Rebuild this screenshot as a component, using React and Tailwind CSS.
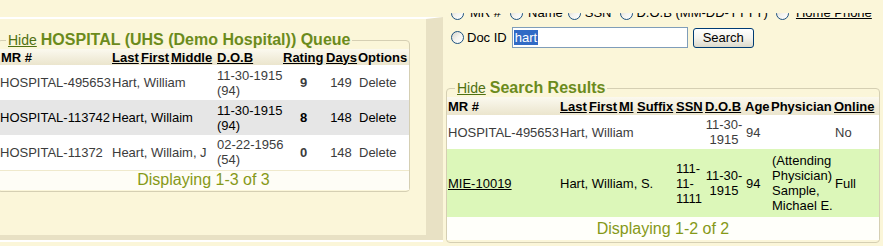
import React from "react";

const Radio = ({ className = "" }) => (
  <span
    className={`inline-block w-[13px] h-[13px] shrink-0 rounded-full border border-[#1c5180] bg-gradient-to-br from-[#d6d4cc] via-[#f4f3ee] to-white ${className}`}
  />
);

const queueRows = [
  { mr: "HOSPITAL-495653", name: "Hart, William", dob: "11-30-1915", age: "(94)", rating: "9", days: "149", bg: "bg-white", text: "text-[#3c3c3c]" },
  { mr: "HOSPITAL-113742", name: "Heart, Willaim", dob: "11-30-1915", age: "(94)", rating: "8", days: "148", bg: "bg-[#e6e6e6]", text: "text-black" },
  { mr: "HOSPITAL-11372", name: "Heart, Willaim, J", dob: "02-22-1956", age: "(54)", rating: "0", days: "148", bg: "bg-white", text: "text-[#3c3c3c]" },
];

function Legend({ title }) {
  return (
    <legend className="ml-[8px] px-[2px] leading-[18px] h-[18px] whitespace-nowrap">
      <span className="text-[14px] text-[#4f7012] underline mr-[4px]">Hide</span>
      <span className="text-[16px] font-bold text-[#6b8b1c]">{title}</span>
    </legend>
  );
}

function QueuePanel() {
  return (
    <fieldset className="ml-[-3px] w-[413px] mt-[12px] border border-[#d5cfb3] rounded-[4px] pb-[1px]">
      <Legend title="HOSPITAL (UHS (Demo Hospital)) Queue" />
      <table className="table-fixed border-collapse w-[411px] text-[13px] leading-[15px]">
        <colgroup>
          <col className="w-[113px]" />
          <col className="w-[29px]" />
          <col className="w-[30px]" />
          <col className="w-[45px]" />
          <col className="w-[67px]" />
          <col className="w-[43px]" />
          <col className="w-[32px]" />
          <col className="w-[52px]" />
        </colgroup>
        <thead>
          <tr className="h-[16px] bg-gradient-to-b from-[#fbf9ef] to-[#ebe5cd] font-bold text-black">
            <th className="text-left pl-[3px] font-bold">MR #</th>
            <th className="text-left pl-[1px] font-bold underline">Last</th>
            <th className="text-left pl-[1px] font-bold underline">First</th>
            <th className="text-left pl-[1px] font-bold underline">Middle</th>
            <th className="text-left pl-[2px] font-bold underline">D.O.B</th>
            <th className="text-left pl-[1px] font-bold underline">Rating</th>
            <th className="text-left pl-[1px] font-bold underline">Days</th>
            <th className="text-left pl-[1px] font-bold">Options</th>
          </tr>
        </thead>
        <tbody>
          {queueRows.map((r) => (
            <tr key={r.mr} className={`h-[35px] ${r.bg} ${r.text}`}>
              <td className="pl-[2px] whitespace-nowrap align-middle">{r.mr}</td>
              <td colSpan={3} className="pl-[1px] whitespace-nowrap align-middle">{r.name}</td>
              <td className="pl-[2px] align-middle">
                <span className="block whitespace-nowrap">{r.dob}</span>
                <span className="block whitespace-nowrap">{r.age}</span>
              </td>
              <td className="text-center font-bold align-middle">{r.rating}</td>
              <td className="text-center align-middle">{r.days}</td>
              <td className="pl-[2px] align-middle">Delete</td>
            </tr>
          ))}
          <tr className="h-[20px]">
            <td colSpan={8} className="text-center text-[16px] leading-[18px] text-[#869918] bg-[#fefdf6] border-t border-[#efe9cc]">
              Displaying 1-3 of 3
            </td>
          </tr>
        </tbody>
      </table>
    </fieldset>
  );
}

function ResultsPanel() {
  return (
    <fieldset className="ml-[3px] w-[434px] mt-[31px] border border-[#d5cfb3] rounded-[4px] pb-[2px]">
      <Legend title="Search Results" />
      <table className="table-fixed border-collapse w-[432px] text-[13px] leading-[15px]">
        <colgroup>
          <col className="w-[112px]" />
          <col className="w-[29px]" />
          <col className="w-[30px]" />
          <col className="w-[18px]" />
          <col className="w-[39px]" />
          <col className="w-[29px]" />
          <col className="w-[40px]" />
          <col className="w-[26px]" />
          <col className="w-[63px]" />
          <col className="w-[46px]" />
        </colgroup>
        <thead>
          <tr className="h-[18px] bg-gradient-to-b from-[#fbf9ef] to-[#ebe5cd] text-black">
            <th className="text-left pl-[1px] font-bold">MR #</th>
            <th className="text-left pl-[1px] font-bold underline">Last</th>
            <th className="text-left pl-[1px] font-bold underline">First</th>
            <th className="text-left pl-[1px] font-bold underline">MI</th>
            <th className="text-left pl-[1px] font-bold underline">Suffix</th>
            <th className="text-left pl-[1px] font-bold underline">SSN</th>
            <th className="text-left pl-[1px] font-bold underline">D.O.B</th>
            <th className="text-left pl-[1px] font-bold">Age</th>
            <th className="text-left pl-[1px] font-bold">Physician</th>
            <th className="text-left pl-[1px] font-bold underline">Online</th>
          </tr>
        </thead>
        <tbody>
          <tr className="h-[34px] bg-white text-[#3c3c3c]">
            <td className="pl-[1px] whitespace-nowrap">HOSPITAL-495653</td>
            <td colSpan={4} className="pl-[1px] whitespace-nowrap">Hart, William</td>
            <td></td>
            <td className="text-center">11-30-1915</td>
            <td className="pl-[2px]">94</td>
            <td></td>
            <td className="pl-[2px]">No</td>
          </tr>
          <tr className="h-[68px] bg-[#dcf7b9] text-black">
            <td className="pl-[1px] whitespace-nowrap underline">MIE-10019</td>
            <td colSpan={4} className="pl-[1px] whitespace-nowrap">Hart, William, S.</td>
            <td className="pl-[1px]">111-11-1111</td>
            <td className="text-center">11-30-1915</td>
            <td className="pl-[2px]">94</td>
            <td className="pl-[2px]">(Attending Physician) Sample, Michael E.</td>
            <td className="pl-[2px]">Full</td>
          </tr>
          <tr className="h-[23px]">
            <td colSpan={10} className="text-center text-[16px] leading-[18px] text-[#869918] bg-[#fffffa]">
              Displaying 1-2 of 2
            </td>
          </tr>
        </tbody>
      </table>
    </fieldset>
  );
}

function SearchForm() {
  return (
    <div className="-mt-[8px] text-[13px] text-black">
      <div className="flex items-center h-[16px] leading-[16px] pl-[8px] whitespace-nowrap">
        <Radio />
        <span className="ml-[6px]">MR #</span>
        <Radio className="ml-[9px]" />
        <span className="ml-[5px]">Name</span>
        <Radio className="ml-[5px]" />
        <span className="ml-[4px]">SSN</span>
        <Radio className="ml-[9px]" />
        <span className="ml-[3px]">D.O.B (MM-DD-YYYY)</span>
        <Radio className="ml-[8px]" />
        <span className="ml-[7px] underline">Home Phone</span>
      </div>
      <div className="flex items-center h-[21px] mt-[6px] pl-[8px]">
        <Radio />
        <span className="ml-[3px]">Doc ID</span>
        <div className="ml-[5px] w-[176px] h-[21px] border border-[#7f9db9] bg-white flex items-center pl-[1px]">
          <span className="bg-[#316ac5] text-white leading-[15px] px-[1px]">hart</span>
        </div>
        <button className="ml-[5px] w-[61px] h-[20px] border border-[#003c74] rounded-[3px] bg-gradient-to-b from-white via-[#f4f3ee] to-[#dcd9cb] text-[13px] leading-[16px] text-black">
          Search
        </button>
      </div>
    </div>
  );
}

export default function App() {
  return (
    <div className="w-[883px] h-[246px] overflow-hidden bg-[#fbf6d9] font-['Liberation_Sans',Arial,sans-serif]">
      <div className="h-[13px]" />
      <div className="flex h-[233px]">
        <div className="w-[443px] shrink-0">
          <div className="mt-[4px] h-[223px] border-t-2 border-t-white border-r-[17px] border-r-[#e8e1c4] border-b-[5px] border-b-[#e8e1c4] overflow-hidden">
            <QueuePanel />
          </div>
          <div className="h-[2px] bg-white" />
        </div>
        <div className="flex-1 overflow-hidden">
          <SearchForm />
          <ResultsPanel />
        </div>
      </div>
    </div>
  );
}
